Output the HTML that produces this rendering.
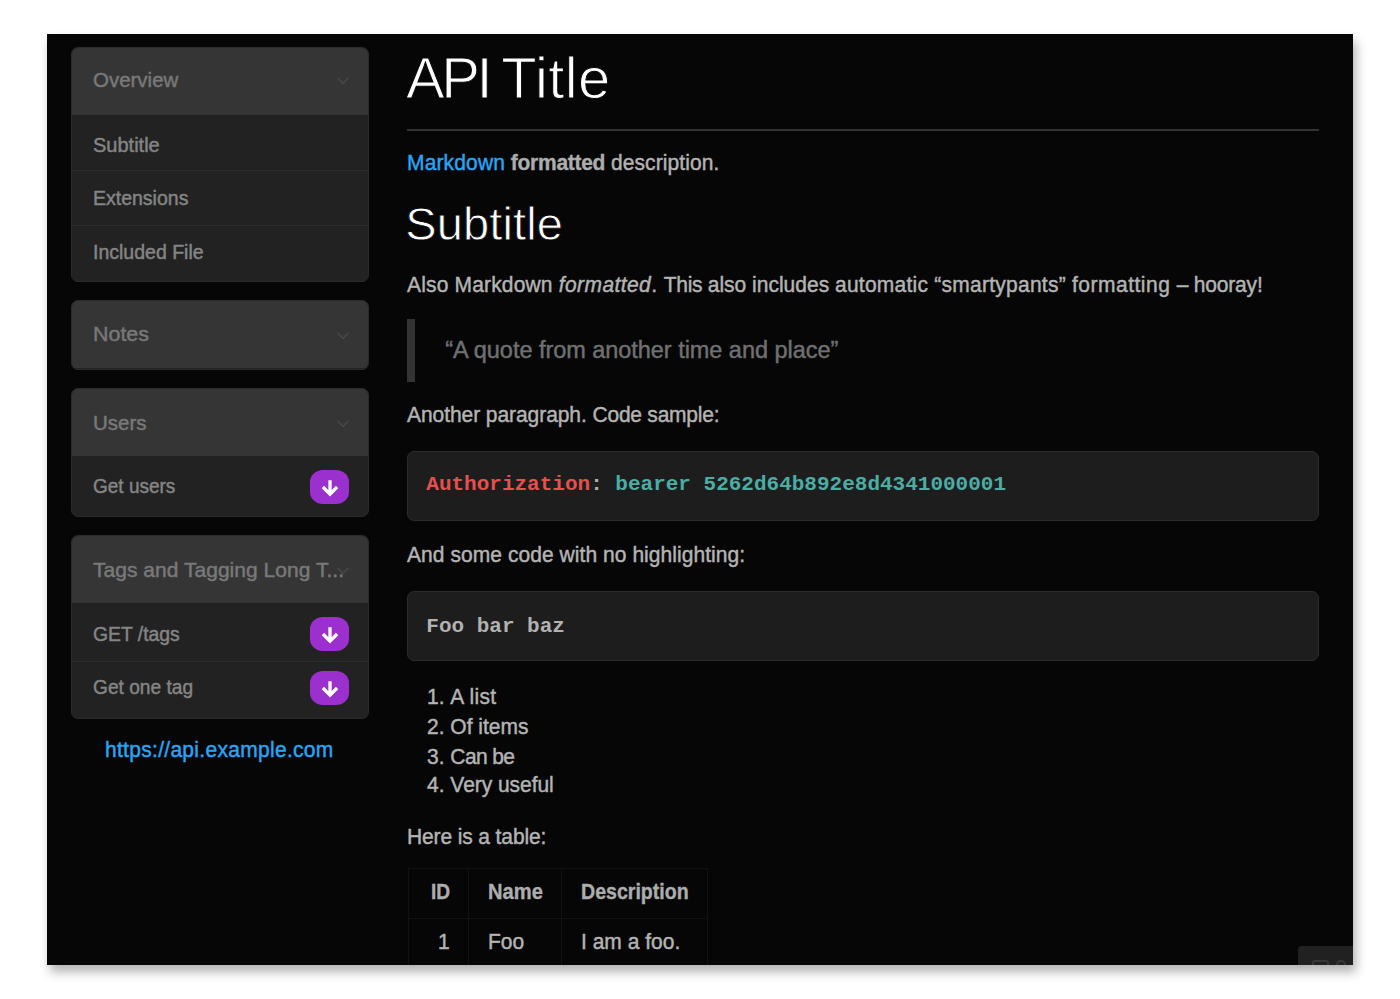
<!DOCTYPE html>
<html lang="en">
<head>
<meta charset="utf-8">
<title>API Title</title>
<style>
*{box-sizing:border-box;margin:0;padding:0}
html,body{width:1400px;height:999px;background:#fff;overflow:hidden}
body{font-family:"Liberation Sans",sans-serif;position:relative}
#page{position:absolute;left:47px;top:34px;width:1306px;height:931px;background:#060606;box-shadow:2.5px 7px 10px rgba(0,0,0,.3)}
#clip{position:absolute;left:0;top:0;width:1306px;height:931px;overflow:hidden}
nav{position:absolute;left:24px;top:0;width:298px}
.panel{position:absolute;left:0;width:298px;background:#222;border:1px solid #2b2b2b;border-radius:7px;overflow:hidden}
.panel ul{list-style:none}
.hd{height:67px;background:#353535;color:#797979;font-size:21px;line-height:26px;padding-left:21px;position:relative;white-space:nowrap}
.chev{position:absolute;left:264px;top:29.5px}
.it{border-top:1px solid #2c2c2c;color:#858585;font-size:20px;line-height:24px;padding-left:21px;position:relative;white-space:nowrap}
.it.first{border-top:none}
.lbl{-webkit-text-stroke:0.45px;display:inline-block;transform-origin:0 50%;color:inherit}
.badge{position:absolute;left:238px;width:39px;height:34px;border-radius:13px/12px;background:#9b30cf}
.badge svg{position:absolute;left:9.5px;top:8px}
.t{-webkit-text-stroke:0.45px;position:absolute;white-space:nowrap;color:#b4b4b4;transform-origin:0 50%}
h1.t,h2.t{color:#fff;font-weight:normal;-webkit-text-stroke:1.1px #060606}
h2.t{-webkit-text-stroke:0.8px #060606}
strong,th{-webkit-text-stroke:0.35px;color:#adadad}
a{color:#27a6f6;text-decoration:none}
hr{position:absolute;left:360px;top:95px;width:912px;height:2px;border:0;background:#333}
blockquote{position:absolute;left:360px;top:285px;width:480px;height:63px;border-left:8px solid #333}
pre{position:absolute;left:360px;width:912px;height:70px;background:#1d1d1d;border:1px solid #2b2b2b;border-radius:7px;font-family:"Liberation Mono",monospace;font-weight:bold;font-size:21px;line-height:30px;padding:18px 0 0 18.3px;color:#b2b2b2}
.k{color:#e5504f}.s{color:#4cada5}
ol{list-style:none}
table{position:absolute;left:361px;top:834px;border-collapse:collapse;table-layout:fixed;color:#b4b4b4;font-size:22px;width:299px}
td,th{border:1px solid #111;height:49px;padding:0 0 0 19px;text-align:left;white-space:nowrap;overflow:visible}
td span,th span{display:inline-block;transform-origin:0 50%}
th{height:50px}
th span{position:relative;top:-1.8px}
td span{-webkit-text-stroke:0.45px;position:relative;top:-1px}
#corner{position:absolute;left:1251px;top:912px;width:60px;height:30px;background:#212121;border-radius:4px 0 0 0}
#corner i{position:absolute;border:2px solid #373737}
</style>
</head>
<body>
<div id="page"><div id="clip">
<nav>
<div class="panel" style="top:13px;height:235px"><div class="hd" style="padding-top:19.1px"><a class="lbl" style="transform:scaleX(0.975);letter-spacing:0px">Overview</a><svg class="chev" style="top:28px" width="14" height="10" viewBox="0 0 14 10"><path d="M1.5 1.8l5.5 5.6 5.5-5.6" fill="none" stroke="#4a4a4a" stroke-width="1.4"/></svg></div><ul><li class="it first" style="height:55px;padding-top:18.2px"><a class="lbl" style="transform:scaleX(1.0);letter-spacing:0px">Subtitle</a></li><li class="it" style="height:55px;padding-top:14.8px"><a class="lbl" style="transform:scaleX(0.975);letter-spacing:0px">Extensions</a></li><li class="it" style="height:57px;padding-top:14.0px"><a class="lbl" style="transform:scaleX(0.975);letter-spacing:0px">Included File</a></li></ul></div>
<div class="panel" style="top:266px;height:70px"><div class="hd" style="padding-top:20.2px"><a class="lbl" style="transform:scaleX(1.02);letter-spacing:0px">Notes</a><svg class="chev" width="14" height="10" viewBox="0 0 14 10"><path d="M1.5 1.8l5.5 5.6 5.5-5.6" fill="none" stroke="#4a4a4a" stroke-width="1.4"/></svg></div></div>
<div class="panel" style="top:354px;height:129px"><div class="hd" style="padding-top:20.9px"><a class="lbl" style="transform:scaleX(0.975);letter-spacing:0px">Users</a><svg class="chev" width="14" height="10" viewBox="0 0 14 10"><path d="M1.5 1.8l5.5 5.6 5.5-5.6" fill="none" stroke="#4a4a4a" stroke-width="1.4"/></svg></div><ul><li class="it first" style="height:61px;padding-top:17.9px"><a class="lbl" style="transform:scaleX(0.95);letter-spacing:0px">Get users</a><span class="badge" style="top:13.7px"><svg width="20" height="20" viewBox="0 0 20 20"><path d="M10 2.2v12.5M2.9 9l7.1 7.1 7.1-7.1" fill="none" stroke="#fff" stroke-width="3.3"/></svg></span></li></ul></div>
<div class="panel" style="top:501px;height:184px"><div class="hd" style="padding-top:21.0px"><a class="lbl" style="transform:scaleX(1.0);letter-spacing:0.03px">Tags and Tagging Long T...</a><svg class="chev" width="14" height="10" viewBox="0 0 14 10"><path d="M1.5 1.8l5.5 5.6 5.5-5.6" fill="none" stroke="#4a4a4a" stroke-width="1.4"/></svg></div><ul><li class="it first" style="height:58px;padding-top:18.8px"><a class="lbl" style="transform:scaleX(0.968);letter-spacing:0px">GET /tags</a><span class="badge" style="top:13.9px"><svg width="20" height="20" viewBox="0 0 20 20"><path d="M10 2.2v12.5M2.9 9l7.1 7.1 7.1-7.1" fill="none" stroke="#fff" stroke-width="3.3"/></svg></span></li><li class="it" style="height:58px;padding-top:13.1px"><a class="lbl" style="transform:scaleX(0.957);letter-spacing:0px">Get one tag</a><span class="badge" style="top:9.3px"><svg width="20" height="20" viewBox="0 0 20 20"><path d="M10 2.2v12.5M2.9 9l7.1 7.1 7.1-7.1" fill="none" stroke="#fff" stroke-width="3.3"/></svg></span></li></ul></div>
</nav>
<p class="t" id="host" style="left:58.2px;top:701.1px;font-size:22px;line-height:30px;transform:scaleX(0.9545);letter-spacing:0.31px;"><a>https://api.example.com</a></p>
<main>
<h1 class="t" id="t1" style="left:359.0px;top:9.3px;font-size:58px;line-height:70px;transform:scaleX(1);"><span style="letter-spacing:-3.40px">API</span><span style="letter-spacing:-4.20px"> </span><span style="letter-spacing:0.40px">Title</span></h1>
<hr>
<p class="t" id="t2" style="left:360.0px;top:114.2px;font-size:22px;line-height:30px;transform:scaleX(0.9545);"><a><span style="letter-spacing:0.15px">Markdown</span></a> <strong><span style="letter-spacing:-0.30px">formatted</span></strong> <span style="letter-spacing:0.10px">description.</span></p>
<h2 class="t" id="t3" style="left:358.2px;top:160.4px;font-size:47px;line-height:60px;transform:scaleX(1);letter-spacing:0.15px;">Subtitle</h2>
<p class="t" id="t4" style="left:360.0px;top:235.7px;font-size:22px;line-height:30px;transform:scaleX(0.9545);"><span style="letter-spacing:0.17px">Also Markdown </span><em><span style="letter-spacing:0.45px">formatted</span></em><span style="letter-spacing:0.45px">. </span><span style="letter-spacing:-0.32px">This </span>also includes <span style="letter-spacing:0.26px">automatic “smartypants” </span><span style="letter-spacing:0.52px">formatting </span><span style="letter-spacing:-0.20px">– hooray!</span></p>
<blockquote><p class="t" id="t5" style="left:30.2px;top:14.0px;font-size:23.5px;line-height:34px;transform:scaleX(1);color:#707070;letter-spacing:-0.04px;">“A quote from another time and place”</p></blockquote>
<p class="t" id="t6" style="left:360.0px;top:365.7px;font-size:22px;line-height:30px;transform:scaleX(0.9545);"><span style="letter-spacing:-0.07px">Another paragraph. </span><span style="letter-spacing:-0.25px">Code sample:</span></p>
<pre style="top:417px"><span class="k">Authorization</span>: <span class="s">bearer 5262d64b892e8d4341000001</span></pre>
<p class="t" id="t7" style="left:360.0px;top:505.8px;font-size:22px;line-height:30px;transform:scaleX(0.9545);"><span style="letter-spacing:0.06px">And some code with no highlighting:</span></p>
<pre style="top:557px;padding-top:19.8px">Foo bar baz</pre>
<ol>
<li class="t" id="l1" style="left:380.0px;top:647.6px;font-size:22px;line-height:30px;transform:scaleX(0.9545);">1. <span style="letter-spacing:0.30px">A list</span></li>
<li class="t" id="l2" style="left:380.0px;top:677.6px;font-size:22px;line-height:30px;transform:scaleX(0.9545);">2. Of items</li>
<li class="t" id="l3" style="left:380.0px;top:707.6px;font-size:22px;line-height:30px;transform:scaleX(0.9545);">3. <span style="letter-spacing:-0.65px">Can be</span></li>
<li class="t" id="l4" style="left:380.0px;top:735.7px;font-size:22px;line-height:30px;transform:scaleX(0.9545);">4. <span style="letter-spacing:-0.05px">Very useful</span></li>
</ol>
<p class="t" id="t8" style="left:360.0px;top:787.7px;font-size:22px;line-height:30px;transform:scaleX(0.9545);"><span style="letter-spacing:-0.13px">Here is a table:</span></p>
<table>
<colgroup><col style="width:60px"><col style="width:93px"><col style="width:146px"></colgroup>
<tr><th style="padding-left:22px"><span style="transform:scaleX(.87)">ID</span></th><th><span style="transform:scaleX(.915)">Name</span></th><th><span style="transform:scaleX(.89)">Description</span></th></tr>
<tr><td style="padding-left:28.5px"><span style="transform:scaleX(.9545)">1</span></td><td><span style="transform:scaleX(.9545)">Foo</span></td><td><span style="transform:scaleX(.9545)">I am a foo.</span></td></tr>
</table>
</main>
<div id="corner"><i style="left:13.5px;top:13.5px;width:17px;height:14px;border-radius:3px"></i><i style="left:37.5px;top:14px;width:10.5px;height:14px;border-radius:5px 5px 0 0"></i></div>
</div></div>
</body>
</html>
